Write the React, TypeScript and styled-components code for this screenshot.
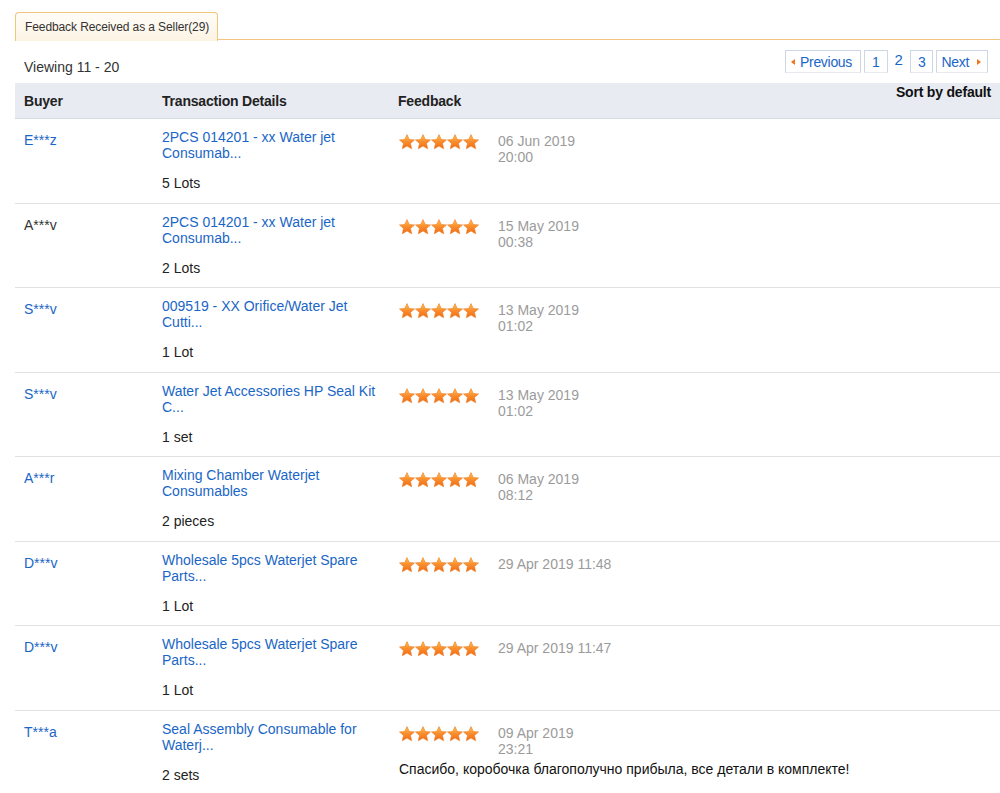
import React from 'react';
import styled, { createGlobalStyle } from 'styled-components';

const GlobalStyle = createGlobalStyle`
  body {
    margin: 0;
    background: #fff;
    font-family: Arial, "Liberation Sans", sans-serif;
    font-size: 14px;
    color: #333;
  }
`;

const Page = styled.div`
  padding: 10px 0 0 15px;
  overflow: hidden;
`;

const TabBar = styled.div`
  display: flex;
  align-items: flex-end;
  height: 30px;
`;

const Tab = styled.div`
  height: 29px;
  box-sizing: border-box;
  padding: 0 8px 0 9px;
  display: flex;
  align-items: center;
  border: 1px solid #f2c47c;
  border-bottom: none;
  border-radius: 4px 4px 0 0;
  background: linear-gradient(#fffdf8, #fdf3e3);
  font-size: 12px;
  letter-spacing: -0.1px;
  color: #333;
  position: relative;
  top: 1px;
`;

const TabLine = styled.div`
  flex: 1;
  border-bottom: 1px solid #f2c47c;
`;

const Toolbar = styled.div`
  display: flex;
  align-items: center;
  justify-content: space-between;
  height: 43px;
  padding: 0 12px 0 9px;
`;

const Viewing = styled.span`
  font-size: 14px;
  color: #333;
  margin-top: 10px;
`;

const Pager = styled.div`
  display: flex;
  align-items: center;
  gap: 3px;
`;

const PageBox = styled.span<{ $pad?: string; $gap?: number }>`
  display: flex;
  align-items: center;
  gap: ${(p) => p.$gap ?? 4}px;
  height: 23px;
  box-sizing: border-box;
  padding: ${(p) => p.$pad ?? '0 6px'};
  border: 1px solid #cdd6e4;
  border-bottom-color: #e6e9ee;
  color: #1a66c6;
  font-size: 14px;
  letter-spacing: -0.3px;
`;

const CurrentPage = styled.span`
  color: #1a66c6;
  font-size: 15px;
  padding: 0 4px 4px;
`;

const Arrow = styled.span<{ $dir: 'left' | 'right' }>`
  width: 0;
  height: 0;
  border-top: 3px solid transparent;
  border-bottom: 3px solid transparent;
  ${(p) => (p.$dir === 'left' ? 'border-right: 4px solid #f0751b;' : 'border-left: 4px solid #f0751b;')}
`;

const Grid = `
  display: grid;
  grid-template-columns: 138px 236px 1fr;
`;

const HeaderRow = styled.div`
  ${Grid}
  height: 36px;
  box-sizing: border-box;
  background: #e8ebf2;
  border-bottom: 1px solid #d7dbe3;
  position: relative;
`;

const HeadCell = styled.div`
  display: flex;
  align-items: center;
  padding-left: 9px;
  font-weight: bold;
  font-size: 14px;
  letter-spacing: -0.2px;
  color: #222;
`;

const SortLabel = styled.div`
  position: absolute;
  right: 9px;
  top: 1px;
  font-weight: bold;
  font-size: 14px;
  letter-spacing: -0.2px;
  color: #111;
`;

const Row = styled.div`
  ${Grid}
  height: 84.5px;
  box-sizing: border-box;
  border-bottom: 1px solid #e2e2e2;
  padding-top: 10px;
`;

const BuyerCell = styled.div<{ $link: boolean }>`
  padding: 3px 0 0 9px;
  line-height: 16px;
  color: ${(p) => (p.$link ? '#1a66c6' : '#333')};
`;

const TxCell = styled.div`
  padding-left: 9px;
`;

const TxLine = styled.div`
  line-height: 16px;
  color: #1a66c6;
  white-space: nowrap;
`;

const Qty = styled.div`
  margin-top: 14px;
  line-height: 16px;
  color: #222;
`;

const FeedCell = styled.div`
  padding: 4px 0 0 10px;
`;

const FeedTop = styled.div`
  display: flex;
  align-items: flex-start;
  gap: 19px;
`;

const Stars = styled.div`
  display: flex;
  margin-top: 1px;
`;

const DateText = styled.div`
  line-height: 16px;
  color: #9b9b9b;
`;

const TimePart = styled.span<{ $split: boolean }>`
  display: ${(p) => (p.$split ? 'block' : 'inline')};
`;

const Comment = styled.div`
  margin-top: 4px;
  line-height: 16px;
  color: #111;
`;

const Star: React.FC<{ id: string }> = ({ id }) => (
  <svg width="16" height="16" viewBox="0 0 16 16">
    <defs>
      <linearGradient id={id} x1="0" y1="0" x2="0" y2="1">
        <stop offset="0" stopColor="#ffc452" />
        <stop offset="0.5" stopColor="#fa8c2c" />
        <stop offset="1" stopColor="#ee6a12" />
      </linearGradient>
    </defs>
    <path
      d="M8 0.6 L10.2 5.4 L15.5 5.9 L11.5 9.4 L12.7 14.8 L8 12 L3.3 14.8 L4.5 9.4 L0.5 5.9 L5.8 5.4 Z"
      fill={`url(#${id})`}
      stroke="#ec7a20"
      strokeWidth="0.6"
      strokeLinejoin="round"
    />
  </svg>
);

interface FeedbackItem {
  buyer: string;
  buyerLink: boolean;
  title: string[];
  qty: string;
  date: string;
  time: string;
  split: boolean;
  comment?: string;
}

const items: FeedbackItem[] = [
  { buyer: 'E***z', buyerLink: true, title: ['2PCS 014201 - xx Water jet', 'Consumab...'], qty: '5 Lots', date: '06 Jun 2019', time: '20:00', split: true },
  { buyer: 'A***v', buyerLink: false, title: ['2PCS 014201 - xx Water jet', 'Consumab...'], qty: '2 Lots', date: '15 May 2019', time: '00:38', split: true },
  { buyer: 'S***v', buyerLink: true, title: ['009519 - XX Orifice/Water Jet', 'Cutti...'], qty: '1 Lot', date: '13 May 2019', time: '01:02', split: true },
  { buyer: 'S***v', buyerLink: true, title: ['Water Jet Accessories HP Seal Kit', 'C...'], qty: '1 set', date: '13 May 2019', time: '01:02', split: true },
  { buyer: 'A***r', buyerLink: true, title: ['Mixing Chamber Waterjet', 'Consumables'], qty: '2 pieces', date: '06 May 2019', time: '08:12', split: true },
  { buyer: 'D***v', buyerLink: true, title: ['Wholesale 5pcs Waterjet Spare', 'Parts...'], qty: '1 Lot', date: '29 Apr 2019', time: '11:48', split: false },
  { buyer: 'D***v', buyerLink: true, title: ['Wholesale 5pcs Waterjet Spare', 'Parts...'], qty: '1 Lot', date: '29 Apr 2019', time: '11:47', split: false },
  {
    buyer: 'T***a',
    buyerLink: true,
    title: ['Seal Assembly Consumable for', 'Waterj...'],
    qty: '2 sets',
    date: '09 Apr 2019',
    time: '23:21',
    split: true,
    comment: 'Спасибо, коробочка благополучно прибыла, все детали в комплекте!',
  },
];

const App: React.FC = () => {
  return (
    <Page>
      <GlobalStyle />
      <TabBar>
        <Tab>Feedback Received as a Seller(29)</Tab>
        <TabLine />
      </TabBar>
      <Toolbar>
        <Viewing>Viewing 11 - 20</Viewing>
        <Pager>
          <PageBox $pad="0 8px 0 5px" $gap={5}>
            <Arrow $dir="left" />
            Previous
          </PageBox>
          <PageBox $pad="0 7px">1</PageBox>
          <CurrentPage>2</CurrentPage>
          <PageBox $pad="0 7px">3</PageBox>
          <PageBox $pad="0 6px 0 4px" $gap={8}>
            Next
            <Arrow $dir="right" />
          </PageBox>
        </Pager>
      </Toolbar>
      <HeaderRow>
        <HeadCell>Buyer</HeadCell>
        <HeadCell>Transaction Details</HeadCell>
        <HeadCell>Feedback</HeadCell>
        <SortLabel>Sort by default</SortLabel>
      </HeaderRow>
      {items.map((item, i) => (
        <Row key={i}>
          <BuyerCell $link={item.buyerLink}>{item.buyer}</BuyerCell>
          <TxCell>
            {item.title.map((line, j) => (
              <TxLine key={j}>{line}</TxLine>
            ))}
            <Qty>{item.qty}</Qty>
          </TxCell>
          <FeedCell>
            <FeedTop>
              <Stars>
                {[0, 1, 2, 3, 4].map((s) => (
                  <Star key={s} id={`star-${i}-${s}`} />
                ))}
              </Stars>
              <DateText>
                {item.date}
                {item.split ? '' : ' '}
                <TimePart $split={item.split}>{item.time}</TimePart>
              </DateText>
            </FeedTop>
            {item.comment && <Comment>{item.comment}</Comment>}
          </FeedCell>
        </Row>
      ))}
    </Page>
  );
};

export default App;
